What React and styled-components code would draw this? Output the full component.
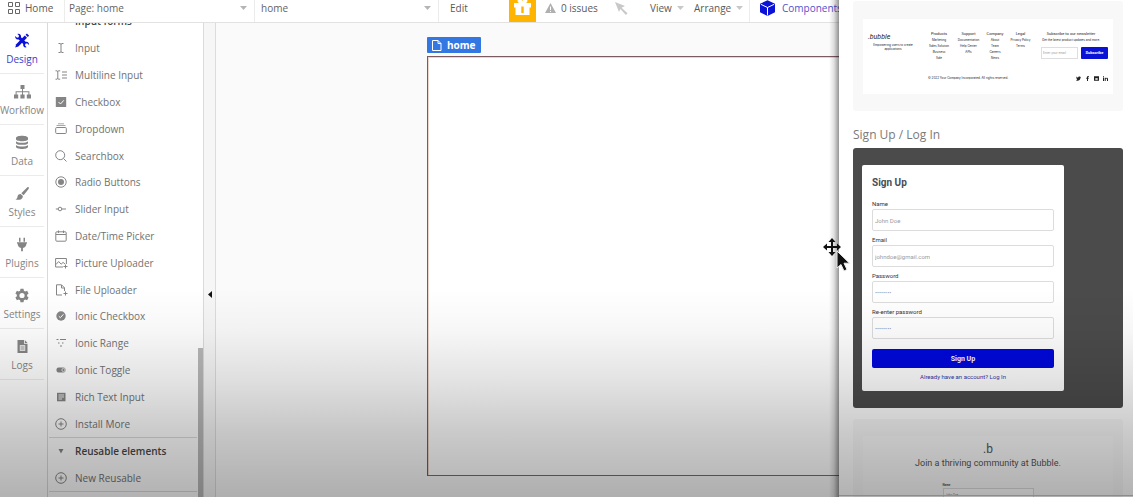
import React from "react";
import styled, { createGlobalStyle } from "styled-components";

const Global = createGlobalStyle`
  *, *::before, *::after { box-sizing: border-box; }
  html, body, #root { height: 100%; }
  body { margin: 0; overflow: hidden; background: #fafafa; color: #5a5a5a; font-family: "Open Sans", "Noto Sans", sans-serif; font-size: 10px; }
  button, input, select { font: inherit; color: inherit; }
  button { border: 0; background: none; padding: 0; }
  ul { list-style: none; margin: 0; padding: 0; }
  a { color: inherit; text-decoration: none; }
  svg { display: block; flex: none; }
  h2, h3, p { margin: 0; }
`;

const Editor = styled.div`
  position: relative;
  display: flex;
  flex-direction: column;
  height: 100vh;
  min-height: 320px;
  overflow: hidden;
`;

/* ---------- top bar ---------- */
const TopBar = styled.header`
  display: flex;
  flex: none;
  height: 23px;
  background: #fff;
  border-bottom: 1px solid #e2e2e2;
  white-space: nowrap;
`;
const BarButton = styled.button`
  display: flex;
  align-items: center;
  gap: ${(p) => p.$gap || 5}px;
  padding: 0 0 6px ${(p) => p.$left || 0}px;
  width: ${(p) => p.$width}px;
  flex: none;
  color: ${(p) => p.$color || "#5a5a5a"};
  border-right: ${(p) => (p.$divided ? "1px solid #ececec" : "0")};
`;
const Picker = styled.label`
  display: flex;
  align-items: center;
  flex: none;
  width: ${(p) => p.$width}px;
  padding: 0 7px 6px ${(p) => p.$left}px;
  border-right: 1px solid #ececec;
`;
const PickerSelect = styled.select`
  appearance: none;
  flex: 1;
  min-width: 0;
  height: 14px;
  border: 0;
  padding: 0;
  background: transparent;
  color: #646464;
`;
const Gift = styled.button`
  display: flex;
  justify-content: center;
  width: 27px;
  height: 22px;
  flex: none;
  background: #ffb400;
`;

/* ---------- left rail ---------- */
const Body = styled.div`
  display: flex;
  flex: 1;
  min-height: 0;
`;
const Rail = styled.nav`
  width: 48px;
  flex: none;
  background: #fff;
  border-right: 1px solid #d9d9d9;
`;
const RailItem = styled.a`
  display: flex;
  flex-direction: column;
  align-items: center;
  gap: 4px;
  height: 51px;
  margin-right: 3px;
  padding-top: 10px;
  border-bottom: 1px solid #ebebeb;
  line-height: 14px;
  color: ${(p) => (p.$active ? "#4040c8" : "#858585")};
`;

/* ---------- element palette ---------- */
const Palette = styled.aside`
  display: flex;
  width: 156px;
  flex: none;
  background: #fff;
  border-right: 1px solid #dadada;
  overflow: hidden;
`;
const PaletteScroll = styled.div`
  flex: 1;
  padding-left: 1px;
`;
const Scrollbar = styled.div`
  width: 5px;
  margin-top: 325px;
  margin-left: 1px;
  background: #b8b8b8;
`;
const ScrolledHeading = styled.h3`
  height: 28px;
  margin-top: -16px;
  padding-left: 26px;
  font-size: 10px;
  line-height: 28px;
  font-weight: 600;
  color: #444;
`;
const ElementList = styled.ul`
  display: grid;
  grid-auto-rows: 1fr;
  height: 402px;
`;
const PaletteRow = styled.button`
  display: grid;
  grid-template-columns: 26px 1fr;
  align-items: center;
  width: 100%;
  height: ${(p) => (p.$fill ? "100%" : "27px")};
  text-align: left;
  font-weight: ${(p) => (p.$strong ? 600 : 400)};
  color: ${(p) => (p.$strong ? "#484848" : "#727272")};
  border-top: ${(p) => (p.$strong ? "1px solid #dcdcdc" : "0")};
  svg { justify-self: start; margin-left: 6px; color: #858585; }
`;
const GroupEnd = styled.div`
  border-bottom: 1px solid #dcdcdc;
`;
const Gutter = styled.button`
  display: flex;
  align-items: center;
  width: 12px;
  padding: 68px 0 0 4px;
  flex: none;
  background: #f6f6f6;
  border-right: 1px solid #dcdcdc;
`;

/* ---------- workspace ---------- */
const Workspace = styled.main`
  display: flex;
  flex-direction: column;
  align-items: flex-start;
  gap: 3px;
  flex: 1;
  min-width: 0;
  padding: 14px 0 21px 211px;
  background: #fafafa;
`;
const PageTag = styled.button`
  display: flex;
  align-items: center;
  gap: 5px;
  height: 16px;
  padding: 0 5px;
  border-radius: 1px;
  background: #3377e2;
  color: #fff;
  font-weight: 700;
`;
const PageCanvas = styled.section`
  flex: 1;
  align-self: stretch;
  background: #fff;
  border: 1px solid #7c5a62;
  border-bottom-color: #77688a;
  border-right: 0;
  box-shadow: inset 1px 1px 0 #ecd5cb;
`;

/* ---------- component panel ---------- */
const Panel = styled.aside`
  position: absolute;
  top: 0;
  right: 0;
  bottom: 0;
  width: 294px;
  padding: 1px 10px 0 14px;
  overflow: hidden;
  background: #fff;
`;
const PanelShadow = styled.div`
  position: absolute;
  top: 0;
  right: 294px;
  bottom: 0;
  width: 10px;
  background: linear-gradient(to right, rgba(0,0,0,0), rgba(0,0,0,.12) 50%, rgba(0,0,0,.42));
`;
const Card = styled.article`
  padding: ${(p) => p.$pad};
  border-radius: 3px;
  background: ${(p) => (p.$dark ? "#4b4b4b" : "#f8f8f8")};
  & + & { margin-top: 11px; }
`;
const SectionTitle = styled.h2`
  padding-top: 15px;
  margin-bottom: 4px;
  line-height: 18px;
  font-size: 12px;
  font-weight: 400;
  color: #7a7a7a;
`;

/* footer preview */
const FooterSheet = styled.div`
  height: 75px;
  padding: 12px 5px 0;
  background: #fff;
  font-family: Inter, Roboto, sans-serif;
  font-size: 3px;
  line-height: 6px;
  color: #222;
`;
const FooterTop = styled.div`
  display: grid;
  grid-template-columns: 56px 30px 29px 24px 27px 1fr;
  height: 44px;
  text-align: center;
  white-space: nowrap;
`;
const Brand = styled.div`
  padding-right: 6px;
  line-height: 4px;
`;
const BrandName = styled.div`
  font-family: Roboto, sans-serif;
  font-size: 7px;
  line-height: 12px;
  font-style: italic;
  text-align: left;
`;
const FooterHead = styled.li`
  font-family: Roboto, sans-serif;
  font-size: 4px;
`;
const Newsletter = styled.div`
  padding-left: 7px;
  p { margin-right: 7px; }
`;
const NewsletterTitle = styled.p`
  font-family: Roboto, sans-serif;
  font-size: 4px;
`;
const Subscribe = styled.form`
  display: grid;
  grid-template-columns: 1fr 27px;
  column-gap: 3px;
  padding-top: 4px;
`;
const EmailInput = styled.input`
  min-width: 0;
  height: 12px;
  padding: 0 1px;
  border: 1px solid #dedede;
  background: #fff;
  &::placeholder { color: #999; opacity: 1; }
`;
const SubscribeButton = styled.button`
  height: 12px;
  border-radius: 1px;
  background: #0a12d6;
  color: #fff;
  font-family: Roboto, sans-serif;
  font-size: 4px;
  font-weight: 700;
`;
const FooterBottom = styled.div`
  display: flex;
  justify-content: space-between;
  align-items: center;
  padding-left: 60px;
`;
const Social = styled.div`
  display: flex;
  gap: 4px;
`;

/* sign-up preview */
const SignUpForm = styled.form`
  width: 202px;
  height: 226px;
  padding: 10px;
  border-radius: 2px;
  background: #fff;
  font-family: Roboto, sans-serif;
  color: #333;
`;
const FormTitle = styled.h3`
  font-size: 10px;
  line-height: 16px;
  font-weight: 700;
  color: #4a4d55;
  margin-bottom: 8px;
`;
const Field = styled.label`
  display: block;
  height: 36px;
  font-size: 6px;
  line-height: 9px;
`;
const FieldInput = styled.input`
  display: block;
  width: 100%;
  height: 22px;
  margin-top: 1px;
  padding: 0 2px;
  border: 1px solid #dcdcdc;
  border-radius: 2px;
  background: #fff;
  font-size: 6px;
  color: #777;
  &::placeholder { color: #9c9c9c; opacity: 1; }
`;
const SubmitButton = styled.button`
  display: block;
  width: 100%;
  height: 19px;
  margin-top: 6px;
  border-radius: 2px;
  background: #0008dc;
  color: #fff;
  font-size: 7px;
  font-weight: 700;
`;
const LoginLink = styled.a`
  display: block;
  margin-top: 4px;
  text-align: center;
  font-size: 6px;
  line-height: 10px;
  color: #3536a8;
`;

/* community preview */
const CommunitySheet = styled.div`
  display: flex;
  flex-direction: column;
  align-items: center;
  height: 120px;
  padding-top: 6px;
  background: #fbfbfb;
  font-family: Roboto, sans-serif;
  color: #555;
`;
const BMark = styled.div`
  font-size: 12px;
  line-height: 14px;
`;
const Pitch = styled.p`
  font-size: 9px;
  line-height: 14px;
`;
const MiniField = styled.label`
  display: block;
  width: 91px;
  margin-top: 12px;
  font-size: 3px;
  line-height: 6px;
  font-weight: 700;
`;
const MiniInput = styled.input`
  display: block;
  width: 100%;
  height: 14px;
  padding: 0 2px;
  border: 1px solid #ddd;
  background: #fff;
  font-weight: 400;
  &::placeholder { color: #888; opacity: 1; }
`;
const PanelEdge = styled.div`
  position: absolute;
  left: 0;
  right: 0;
  bottom: 1px;
  height: 1px;
  background: #c8c8c8;
`;

/* ---------- overlays ---------- */
const Shade = styled.div`
  position: absolute;
  inset: 58% 0 0;
  pointer-events: none;
  background: linear-gradient(to bottom, rgba(0,0,0,0), rgba(0,0,0,.03) 20%, rgba(0,0,0,.11) 44%, rgba(0,0,0,.21) 70%, rgba(0,0,0,.3));
`;
const Pointer = styled.div`
  position: absolute;
  top: 238px;
  right: 282px;
`;

/* ---------- icons ---------- */
const Icon = ({ w = 12, h = 12, children, ...rest }) => (
  <svg width={w} height={h} viewBox={`0 0 ${w} ${h}`} fill="none" stroke="currentColor" strokeWidth="1" aria-hidden="true" {...rest}>
    {children}
  </svg>
);
const Caret = ({ color = "#b5b5b5" }) => (
  <Icon w={7} h={4} stroke="none" fill={color}><path d="M0 0h7L3.5 4z" /></Icon>
);
const solid = { fill: "currentColor", stroke: "none" };

const railIcons = {
  Design: (
    <Icon w={16} h={15} stroke="none" fill="#0a10d8">
      <path d="M2.200 11.200 10.800 2.600l2.200 2.200-8.600 8.600-3.200 1z" />
      <path d="M11.600 1.800l1.300-1.200 2.200 2.200-1.300 1.200z" />
      <path d="M1.300 3 3 4.700 4.700 4.300 5 2.600 3.400.900C5.500.300 7.500 1.800 7 4.200l4.600 4.600c2-.6 3.900 1 3.300 3.200l-1.800-1.700-1.700.5-.4 1.700 1.600 1.800c-2.200.5-3.900-1-3.400-3.300L4.700 6.500C2.500 7 .800 5.200 1.300 3z" />
    </Icon>
  ),
  Workflow: (
    <Icon w={17} h={15} {...solid}>
      <path d="M6.500 1h4v4h-4zM0 10.500h4.200v4H0zM6.400 10.500h4.200v4H6.400zM12.800 10.500H17v4h-4.200zM8 5h1v2.200h6.400v3.300h-1V8.200H9v2.300H8V8.200H2.600v2.300h-1V7.200H8z" />
    </Icon>
  ),
  Data: (
    <Icon w={12} h={15} {...solid}>
      <path d="M0 3c0-3 12-3 12 0v1.200c0 2.600-12 2.600-12 0zM0 6.200c2 2 10 2 12 0v1.700c0 2.600-12 2.600-12 0zM0 9.900c2 2 10 2 12 0v1.900c0 3-12 3-12 0z" />
    </Icon>
  ),
  Styles: (
    <Icon w={14} h={15} {...solid}>
      <path d="M13.600 1.200c.6.600.2 1.500-.4 2.400L8.600 9.300 6.300 7.200l5.300-5.300c.7-.7 1.400-1.200 2-.7zM5.600 7.900l2.300 2.200c.1 3.300-4.200 4.700-7.400 3.100 2-.5 1.700-1.700 2.100-3 .4-1.500 1.600-2.400 3-2.300z" />
    </Icon>
  ),
  Plugins: (
    <Icon w={12} h={15} {...solid}>
      <path d="M3 .8h1.500v4H3zM7.500.8H9v4H7.500zM1 5.200h10v1.300h-.6c0 2.700-1.400 4-3.500 4.500v3.200H5.100V11C3 10.500 1.600 9.200 1.600 6.500H1z" />
    </Icon>
  ),
  Settings: (
    <Icon w={14} h={15} {...solid}>
      <path fillRule="evenodd" d="M5.500.8h3l.4 2 1.300.7 1.900-.7 1.500 2.600-1.500 1.300v1.600l1.500 1.300-1.500 2.600-1.900-.7-1.300.7-.4 2h-3l-.4-2-1.300-.7-1.900.7L.4 9.600l1.500-1.300V6.700L.4 5.400l1.500-2.600 1.900.7 1.300-.7zM7 4.900a2.600 2.600 0 1 0 0 5.200 2.600 2.600 0 0 0 0-5.200z" />
    </Icon>
  ),
  Logs: (
    <Icon w={11} h={15} {...solid}>
      <path fillRule="evenodd" d="M.5 1H7v3.800h3.500V14H.5zM2.800 6.300v5.400h5.400V6.300z" /><path d="M7.800 1l2.700 3H7.800z" /><path d="M3.400 7h4.200v4H3.400z" opacity=".5" />
    </Icon>
  ),
};

const plusCircle = <Icon><circle cx="6" cy="6" r="5.300" /><path d="M6 3.500v5M3.500 6h5" /></Icon>;
const elements = [
  ["Input", <Icon><path d="M3.500 1.500H5l1 .7 1-.7h1.500M3.500 10.500H5l1-.7 1 .7h1.500M6 2v8" /></Icon>],
  ["Multiline Input", <Icon><path d="M.5 1.800H2l.8.7.8-.7h1.600M.5 10.200H2l.8-.7.8.7h1.600M2.800 2v8M7 3h5M7 6h5M7 9h5" /></Icon>],
  ["Checkbox", <Icon><path d="M.8 1h10.400v10H.8z" {...solid} /><path d="M3.500 6l2 2 3.300-3.700" stroke="#fff" /></Icon>],
  ["Dropdown", <Icon><rect x=".7" y="4.500" width="10.600" height="6" rx="1" /><path d="M1.500 2.500h9M3 .8h6" opacity=".7" /></Icon>],
  ["Searchbox", <Icon><circle cx="5.200" cy="5.200" r="4.500" /><path d="M8.500 8.500l3 3" /></Icon>],
  ["Radio Buttons", <Icon><circle cx="6" cy="6" r="5.200" /><circle cx="6" cy="6" r="3" {...solid} /></Icon>],
  ["Slider Input", <Icon><circle cx="5" cy="6" r="1.800" /><path d="M.8 6h2.400M6.800 6h4.200" /></Icon>],
  ["Date/Time Picker", <Icon><rect x=".8" y="1.800" width="10.400" height="9.400" rx="1" /><path d="M1 4.500h10M3.500.5v2.500M8.500.5v2.500" /></Icon>],
  ["Picture Uploader", <Icon w={13}><path d="M8 10H.6V1.500h10.800V7M1 7.500l2.700-3 2.400 2.700 2-1.800L10 7M10.500 7.500v4M8.500 9.500h4" /></Icon>],
  ["File Uploader", <Icon w={13}><path d="M7 11H1.500V.8h5l3 3V7M6.500 1v3h3M10.500 7.500v4M8.500 9.500h4" /></Icon>],
  ["Ionic Checkbox", <Icon><circle cx="6" cy="6" r="4.700" {...solid} /><path d="M3.800 6.200l1.600 1.500 3-3.400" stroke="#fff" /></Icon>],
  ["Ionic Range", <Icon><path d="M1.500 2.500h2M5 2.500h6M3 6h1.500M7 6h1.500M5 9h2" /></Icon>],
  ["Ionic Toggle", <Icon><rect x="1.500" y="3.500" width="9" height="5" rx="2" {...solid} /><circle cx="8.500" cy="6" r="1.600" stroke="#ddd" /></Icon>],
  ["Rich Text Input", <Icon><path d="M2 1.800h8.500v8.500H2z" {...solid} /><path d="M3.500 4h5.500M3.500 6h5.500M3.500 8h3.500" stroke="#eee" /></Icon>],
  ["Install More", plusCircle],
];

const footerColumns = [
  ["Products", "Marketing", "Sales Solution", "Business", "Sale"],
  ["Support", "Documentation", "Help Center", "APIs"],
  ["Company", "About", "Team", "Careers", "News"],
  ["Legal", "Privacy Policy", "Terms"],
];

const FooterPreview = () => (
  <Card $pad="18px 10px 17px">
    <FooterSheet>
      <FooterTop>
        <Brand>
          <BrandName>.bubble</BrandName>
          <p>Empowering users to create<br />applications</p>
        </Brand>
        {footerColumns.map(([head, ...links]) => (
          <ul key={head}>
            <FooterHead>{head}</FooterHead>
            {links.map((l) => <li key={l}><a href="#link">{l}</a></li>)}
          </ul>
        ))}
        <Newsletter>
          <NewsletterTitle>Subscribe to our newsletter</NewsletterTitle>
          <p>Get the latest product updates and more.</p>
          <Subscribe>
            <EmailInput aria-label="Email" placeholder="Enter your email" />
            <SubscribeButton type="button">Subscribe</SubscribeButton>
          </Subscribe>
        </Newsletter>
      </FooterTop>
      <FooterBottom>
        <span>© 2022 Your Company Incorporated. All rights reserved.</span>
        <Social>
          <Icon w={5} h={5} {...solid}><path d="M0 .5l2 1.300C2.200.3 3.700.200 4.300.900L5 .800 4.500 1.800C4.400 4.500 1.500 5.400 0 4.200L1.300 3.700.300 2.800l.5-.2z" /></Icon>
          <Icon w={5} h={5} {...solid}><path d="M2 5V2.700H1.200V1.800H2C2 .300 2.500 0 3.800.100v.8C3 .900 3 1 3 1.800h.8l-.1.9H3V5z" /></Icon>
          <Icon w={5} h={5} {...solid}><path fillRule="evenodd" d="M0 .3h5v4.500H0zM1.300 2.300v1.500h2.400V2.300z" /></Icon>
          <Icon w={5} h={5} {...solid}><path d="M0 1.700h1V5H0zM0 .300h1v.9H0zM1.700 1.700h1v.5C3.200 1.400 5 1.400 5 3v2H4V3.200c0-1-1.300-.8-1.300 0V5h-1z" /></Icon>
        </Social>
      </FooterBottom>
    </FooterSheet>
  </Card>
);

const fields = [
  ["Name", "text", "John Doe"],
  ["Email", "email", "johndoe@gmail.com"],
  ["Password", "password", "••••••••"],
  ["Re-enter password", "password", "••••••••"],
];

export default function App() {
  return (
    <Editor>
      <Global />
      <TopBar>
        <BarButton $left={8} $width={65} $divided>
          <Icon color="#666"><path d="M.5.500h4v4h-4zM7.500.500h4v4h-4zM.5 7.500h4v4h-4zM7.500 7.500h4v4h-4z" /></Icon>
          Home
        </BarButton>
        <Picker $width={190} $left={4}>
          <PickerSelect aria-label="Page"><option>Page: home</option></PickerSelect>
          <Caret />
        </Picker>
        <Picker $width={184} $left={6}>
          <PickerSelect aria-label="Element"><option>home</option></PickerSelect>
          <Caret />
        </Picker>
        <BarButton $left={11} $width={70}>Edit</BarButton>
        <Gift aria-label="Gifts">
          <Icon w={19} h={16} fill="#fff" stroke="none">
            <path fillRule="evenodd" d="M1 3h5C4 2 4-1 6.500-1 8-1 9 0 9.500 1 10-0 11-1 12.500-1 15-1 15 2 13 3h5v4.500h-1.500V15h-14V7.500H1zM8.300 6.500V13h2.400V6.500z" />
          </Icon>
        </Gift>
        <BarButton $left={9} $width={79} $gap={5}>
          <Icon w={11} h={10} fill="#b0b0b0" stroke="none"><path fillRule="evenodd" d="M5.500 0 11 10H0zM5 3.500v3.500h1V3.500zM5 8v1h1V8z" /></Icon>
          0 issues
        </BarButton>
        <BarButton $width={35} aria-label="Inspect">
          <Icon w={13} h={13} fill="#c8c8c8" stroke="none"><path d="M0 0l10 4-3.500 1.800 6 5.500-1.600 1.600-5.500-6L4 10z" /></Icon>
        </BarButton>
        <BarButton $width={44} $gap={5}>View <Caret color="#c8c8c8" /></BarButton>
        <BarButton $width={56} $gap={5} $divided>Arrange <Caret color="#c8c8c8" /></BarButton>
        <BarButton $left={10} $width={90} $gap={7} $color="#5252cc">
          <Icon w={15} h={16} stroke="none">
            <path d="M7.500.200 15 3.800v8.400l-7.500 3.700L0 12.200V3.800z" fill="#0a12d8" />
            <path d="M.8 4.300 7.500 7.500l6.700-3.200M7.500 7.500v8" stroke="#fff" />
          </Icon>
          Components
        </BarButton>
      </TopBar>
      <Body>
        <Rail>
          {Object.entries(railIcons).map(([name, icon]) => (
            <RailItem key={name} href={`#${name}`} $active={name === "Design"}>{icon}{name}</RailItem>
          ))}
        </Rail>
        <Palette>
          <PaletteScroll>
            <ScrolledHeading>Input forms</ScrolledHeading>
            <ElementList>
              {elements.map(([name, icon]) => (
                <li key={name}><PaletteRow $fill>{icon}{name}</PaletteRow></li>
              ))}
            </ElementList>
            <GroupEnd>
              <PaletteRow $strong><Icon><path d="M3.500 4h5L6 8.500z" {...solid} /></Icon>Reusable elements</PaletteRow>
              <PaletteRow>{plusCircle}New Reusable</PaletteRow>
            </GroupEnd>
          </PaletteScroll>
          <Scrollbar />
        </Palette>
        <Gutter aria-label="Collapse palette">
          <Icon w={4} h={7} fill="#111" stroke="none"><path d="M4 0v7L0 3.500z" /></Icon>
        </Gutter>
        <Workspace>
          <PageTag>
            <Icon w={10} h={11}><path d="M.5.500h5.500l3 3v7H.5zM6 .500v3h3" /></Icon>
            home
          </PageTag>
          <PageCanvas aria-label="home" />
        </Workspace>
      </Body>
      <PanelShadow />
      <Panel>
        <FooterPreview />
        <SectionTitle>Sign Up / Log In</SectionTitle>
        <Card $dark $pad="17px 9px">
          <SignUpForm>
            <FormTitle>Sign Up</FormTitle>
            {fields.map(([label, type, hint]) => (
              <Field key={label}>{label}<FieldInput type={type} placeholder={hint} /></Field>
            ))}
            <SubmitButton type="button">Sign Up</SubmitButton>
            <LoginLink href="#login">Already have an account? Log In</LoginLink>
          </SignUpForm>
        </Card>
        <Card $pad="17px 10px 0">
          <CommunitySheet>
            <BMark>.b</BMark>
            <Pitch>Join a thriving community at Bubble.</Pitch>
            <MiniField>Name<MiniInput placeholder="John Doe" /></MiniField>
          </CommunitySheet>
        </Card>
        <PanelEdge />
      </Panel>
      <Shade />
      <Pointer>
        <Icon w={28} h={34} stroke="none">
          <path d="M9 0l3.500 4H10v4h4V5.500L18 9l-4 3.500V10h-4v4h2.500L9 18l-3.500-4H8v-4H4v2.500L0 9l4-3.500V8h4V4H5.500z" fill="#111" />
          <path d="M14 13v17l4-3.500 3 6.500 3-1.500-3-6.300h5.500z" fill="#111" stroke="#eee" />
        </Icon>
      </Pointer>
    </Editor>
  );
}
